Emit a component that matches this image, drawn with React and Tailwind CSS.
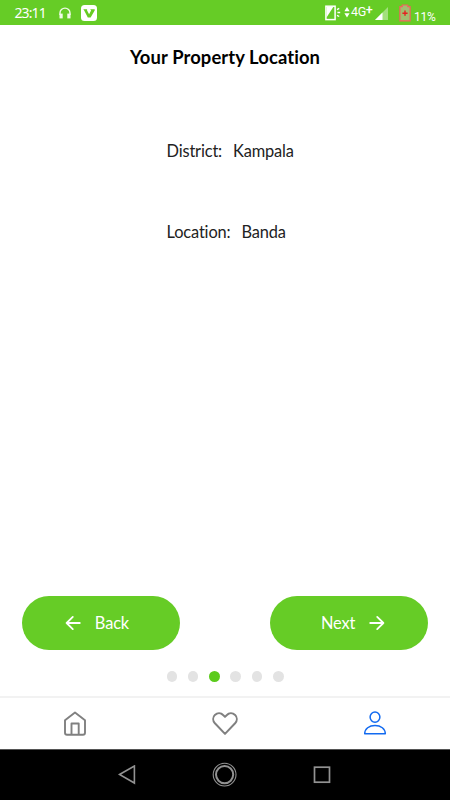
const HeadphonesIcon = () => (
    <svg width="12" height="12" viewBox="0 0 12 12" fill="none" stroke="#f0fae8" strokeWidth="1.4">
        <path d="M1 8V6a5 4.9 0 0 1 10 0v2" />
        <rect x="1.2" y="7.3" width="1.8" height="3.4" fill="#f0fae8" />
        <rect x="9" y="7.3" width="1.8" height="3.4" fill="#f0fae8" />
    </svg>
);

const VIcon = () => (
    <svg width="16" height="16" viewBox="0 0 16 16">
        <rect width="16" height="16" rx="3.5" fill="#fff" />
        <path d="M2.3 4.2h3.8v1.2l2 3.8 2-3.8-.9-1.2h4.5v1.3L9.6 12.4H6.8L3.2 5.6z" fill="#66cc22" />
    </svg>
);

const VibrateIcon = () => (
    <svg width="16" height="16" viewBox="0 0 16 16" fill="none" stroke="#fff">
        <rect x=".9" y="1.2" width="9.2" height="13.4" strokeWidth="1.5" />
        <path d="M1.5 12.5V2h6.8z" fill="#fff" stroke="none" />
        <path d="M12 4.6l2.2-1.2M12.4 7.5h2.8M12 10.3l2.2 1.2" strokeWidth="1.4" />
    </svg>
);

const DataArrowsIcon = () => (
    <svg width="6" height="11" viewBox="0 0 6 11" fill="#fff">
        <path d="M3 0l2.6 4.3H.4zM3 10.6L.4 6.3h5.2z" />
    </svg>
);

const SignalIcon = () => (
    <svg width="13" height="13" viewBox="0 0 13 13" fill="#fff">
        <path d="M13 0v13H0z" opacity=".4" />
        <path d="M7.5 5.5V13H0z" />
    </svg>
);

const BatteryIcon = () => (
    <svg width="12" height="18" viewBox="0 0 12 18" fill="none">
        <path d="M3.2 2.6V1h5.6v1.6h2.3v14.3H.9V2.6z" fill="#a3bd70" stroke="#f2635a" strokeWidth="1.2" />
        <path d="M6 6.6v5.2M3.4 9.2h5.2" stroke="#e52020" strokeWidth="1.4" />
    </svg>
);

const ArrowIcon = ({ className }) => (
    <svg className={className} width="16" height="16" viewBox="0 0 16 16" fill="none" stroke="#fff" strokeWidth="1.8" strokeLinecap="round" strokeLinejoin="round">
        <path d="M1.2 8h13.2M8.2 1.9L14.4 8l-6.2 6.1" />
    </svg>
);

const HomeIcon = () => (
    <svg width="24" height="26" viewBox="0 0 24 26" fill="none" stroke="#808080" strokeWidth="1.9" strokeLinejoin="round">
        <path d="M2 9.3L12 1.5l10 7.8v12.4a2 2 0 0 1-2 2H4a2 2 0 0 1-2-2z" />
        <path d="M8.5 23.5v-11h7.2v11" />
    </svg>
);

const HeartIcon = () => (
    <svg width="28" height="26" viewBox="0 0 28 26" fill="none" stroke="#808080" strokeWidth="2" strokeLinejoin="round">
        <path d="M14 22.9L3.9 12.3C1.6 9.7 1.7 6.1 3.9 3.9 6.5 1.5 10 1.8 12.1 4L14 5.9 15.9 4c2.1-2.2 5.6-2.5 8.2-.1 2.2 2.2 2.3 5.8 0 8.4z" />
    </svg>
);

const PersonIcon = () => (
    <svg width="24" height="26" viewBox="0 0 24 26" fill="none" stroke="#126af0" strokeWidth="1.5" strokeLinejoin="round">
        <ellipse cx="12" cy="6.1" rx="4.9" ry="5.2" />
        <path d="M1.7 22.7c0-5 4.5-8.2 10.3-8.2s10.3 3.2 10.3 8.2z" />
    </svg>
);

const StatusBar = () => (
    <header className="flex h-[25px] items-center bg-[#66cc26] pl-[14.5px] pr-[15px] text-white">
        <span className="w-[32px] whitespace-nowrap font-['Noto_Sans',sans-serif] text-[14px] leading-none tracking-[-0.9px]">23:11</span>
        <div className="ml-[12.5px] flex items-center gap-[10px]">
            <HeadphonesIcon />
            <VIcon />
        </div>
        <div className="ml-auto flex items-center font-['Roboto',sans-serif]">
            <VibrateIcon />
            <span className="ml-[3px]"><DataArrowsIcon /></span>
            <span className="ml-px flex w-[21px] items-center text-[12.5px] leading-none tracking-[-0.4px]">
                4G<span className="-mt-[4px] font-medium">+</span>
            </span>
            <span className="ml-[3px] mt-px"><SignalIcon /></span>
            <span className="ml-[11px]"><BatteryIcon /></span>
            <span className="ml-[3px] mt-[8px] w-[21px] whitespace-nowrap text-[12px] leading-none tracking-[-0.3px]">11%</span>
        </div>
    </header>
);

const details = [
    { label: 'District:', value: 'Kampala' },
    { label: 'Location:', value: 'Banda' },
];

const STEP_COUNT = 6;
const currentStep = 2;

const App = () => {
    return (
        <div className="flex h-[800px] w-[450px] flex-col overflow-hidden bg-white font-['Lato',sans-serif] text-[#222] [font-variant-ligatures:none]">
            <StatusBar />

            <main className="flex flex-1 flex-col">
                <h1 className="mt-[20px] text-center text-[18.4px] font-bold leading-6 tracking-[0.1px] text-black">Your Property Location</h1>

                <div className="mt-[70px] flex flex-col gap-[57px] pl-[166.5px] text-[16.4px] leading-6 tracking-[-0.15px]">
                    {details.map(({ label, value }) => (
                        <div key={label} className="flex gap-[11px]">
                            <span>{label}</span>
                            <span>{value}</span>
                        </div>
                    ))}
                </div>

                {/* Step navigation */}
                <div className="mt-auto flex justify-between px-[22.4px] text-[16.4px] tracking-[-0.15px] text-white">
                    <button className="flex h-[54px] w-[157.6px] items-center justify-center gap-[13.5px] rounded-full bg-[#66cc26] pr-[8px]">
                        <ArrowIcon className="rotate-180" />
                        Back
                    </button>
                    <button className="flex h-[54px] w-[157.6px] items-center justify-center gap-[13.5px] rounded-full bg-[#66cc26] pl-[8px]">
                        Next
                        <ArrowIcon />
                    </button>
                </div>

                <div className="mb-[14px] mt-[21px] flex justify-center gap-[10.7px]">
                    {Array.from({ length: STEP_COUNT }, (_, i) => (
                        <span key={i} className={`size-[10.6px] rounded-full ${i === currentStep ? 'bg-[#5bcb1c]' : 'bg-[#e3e3e3]'}`} />
                    ))}
                </div>
            </main>

            {/* Tab bar */}
            <nav className="grid h-[53px] grid-cols-3 items-center justify-items-center border-t-2 border-[#f2f2f2]">
                <HomeIcon />
                <HeartIcon />
                <PersonIcon />
            </nav>

            {/* System navigation */}
            <footer className="flex h-[51px] items-center justify-between border-t border-[#555] bg-black pl-[118px] pr-[119px]">
                <svg width="18" height="20" viewBox="0 0 18 20" fill="none" stroke="#929292" strokeWidth="1.6">
                    <path d="M1.5 9.5L16.4 1v17z" />
                </svg>
                <svg width="26" height="26" viewBox="0 0 26 26" fill="none" stroke="#929292">
                    <circle cx="12.6" cy="12.6" r="11.4" strokeWidth="1.1" />
                    <circle cx="12.6" cy="12.6" r="8.6" strokeWidth="2" />
                </svg>
                <svg width="18" height="18" viewBox="0 0 18 18" fill="none" stroke="#929292" strokeWidth="1.7">
                    <rect x="1.5" y="1.2" width="15" height="15" />
                </svg>
            </footer>
        </div>
    );
};

export default App;
